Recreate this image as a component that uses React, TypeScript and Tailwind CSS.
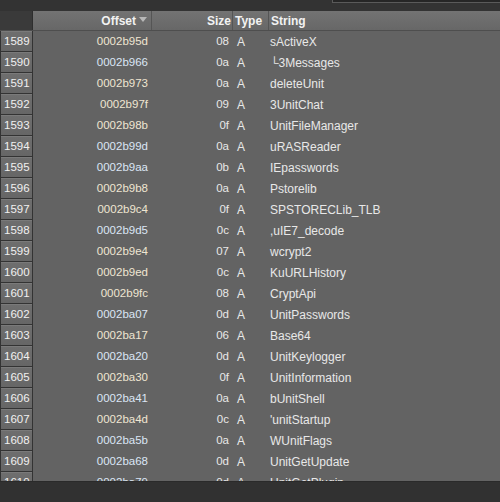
import React from "react";

const rows: [number, string, string, string, "b" | "y"][] = [
  [1589, "0002b95d", "08", "sActiveX", "y"],
  [1590, "0002b966", "0a", "\u25143Messages", "b"],
  [1591, "0002b973", "0a", "deleteUnit", "y"],
  [1592, "0002b97f", "09", "3UnitChat", "y"],
  [1593, "0002b98b", "0f", "UnitFileManager", "y"],
  [1594, "0002b99d", "0a", "uRASReader", "b"],
  [1595, "0002b9aa", "0b", "IEpasswords", "b"],
  [1596, "0002b9b8", "0a", "Pstorelib", "y"],
  [1597, "0002b9c4", "0f", "SPSTORECLib_TLB", "y"],
  [1598, "0002b9d5", "0c", ",uIE7_decode", "b"],
  [1599, "0002b9e4", "07", "wcrypt2", "y"],
  [1600, "0002b9ed", "0c", "KuURLHistory", "y"],
  [1601, "0002b9fc", "08", "CryptApi", "y"],
  [1602, "0002ba07", "0d", "UnitPasswords", "b"],
  [1603, "0002ba17", "06", "Base64", "y"],
  [1604, "0002ba20", "0d", "UnitKeylogger", "b"],
  [1605, "0002ba30", "0f", "UnitInformation", "y"],
  [1606, "0002ba41", "0a", "bUnitShell", "b"],
  [1607, "0002ba4d", "0c", "'unitStartup", "y"],
  [1608, "0002ba5b", "0a", "WUnitFlags", "b"],
  [1609, "0002ba68", "0d", "UnitGetUpdate", "b"],
  [1610, "0002ba79", "0d", "UnitGetPlugin", "b"],
];

export default function App() {
  return (
    <div
      className="w-[500px] h-[502px] flex flex-col bg-[#333333] overflow-hidden text-[11.5px] text-[#e8e8e8]"
      style={{ fontFamily: '"Liberation Sans", Arial, sans-serif' }}
    >
      {/* top bar */}
      <div className="h-[11px] flex shrink-0 bg-[#333333]">
        <div className="flex-1" />
        <div className="w-[168px] h-[3px] border-l border-b border-[#5a5a5a] bg-[#262626]" />
      </div>
      {/* header */}
      <div className="h-[20px] flex shrink-0 font-bold text-[12px] text-[#f2f2f2] border-b border-[#4e4e4e]">
        <div className="w-[33px] bg-[#3a3a3a] border-r border-[#2e2e2e]" />
        <div className="flex flex-1 bg-gradient-to-b from-[#737373] to-[#676767]">
          <div className="w-[119px] flex items-center justify-end pr-[4px] border-r border-[#555]">
            <span>Offset</span>
            <svg width="8" height="5" viewBox="0 0 8 5" className="ml-[3px] mb-[2px]">
              <polygon points="0,0 8,0 4,5" fill="#b8b8b8" />
            </svg>
          </div>
          <div className="w-[81px] flex items-center justify-end pr-[1px] border-r border-[#555]">
            Size
          </div>
          <div className="w-[36px] flex items-center pl-[2px] border-r border-[#555]">
            Type
          </div>
          <div className="flex-1 flex items-center pl-[2px]">String</div>
        </div>
      </div>
      {/* body */}
      <div className="flex-1 flex flex-col bg-[#636363] overflow-hidden">
        {rows.map(([n, off, size, str, c]) => (
          <div key={n} className="h-[21px] flex shrink-0 items-stretch">
            <div className="w-[33px] shrink-0 bg-[#333333] pr-[1px] pl-[1px] pb-[1px]">
              <div className="h-full bg-gradient-to-b from-[#6e6e6e] to-[#666666] border-t border-[#7a7a7a] flex items-center pl-[3px] text-[#f0f0f0]">
                {n}
              </div>
            </div>
            <div
              className={
                "w-[119px] flex items-center justify-end pr-[4px] " +
                (c === "b" ? "text-[#dbe6f5]" : "text-[#efe6d2]")
              }
            >
              {off}
            </div>
            <div className="w-[80px] flex items-center justify-end pr-[3px]">{size}</div>
            <div className="w-[36px] flex items-center pl-[5px] text-[12px]">A</div>
            <div className="flex-1 flex items-center pl-[2px] whitespace-nowrap text-[12px]">{str}</div>
          </div>
        ))}
      </div>
      {/* bottom bar */}
      <div className="h-[21px] shrink-0 bg-[#313131] border-t border-[#2a2a2a]" />
    </div>
  );
}
